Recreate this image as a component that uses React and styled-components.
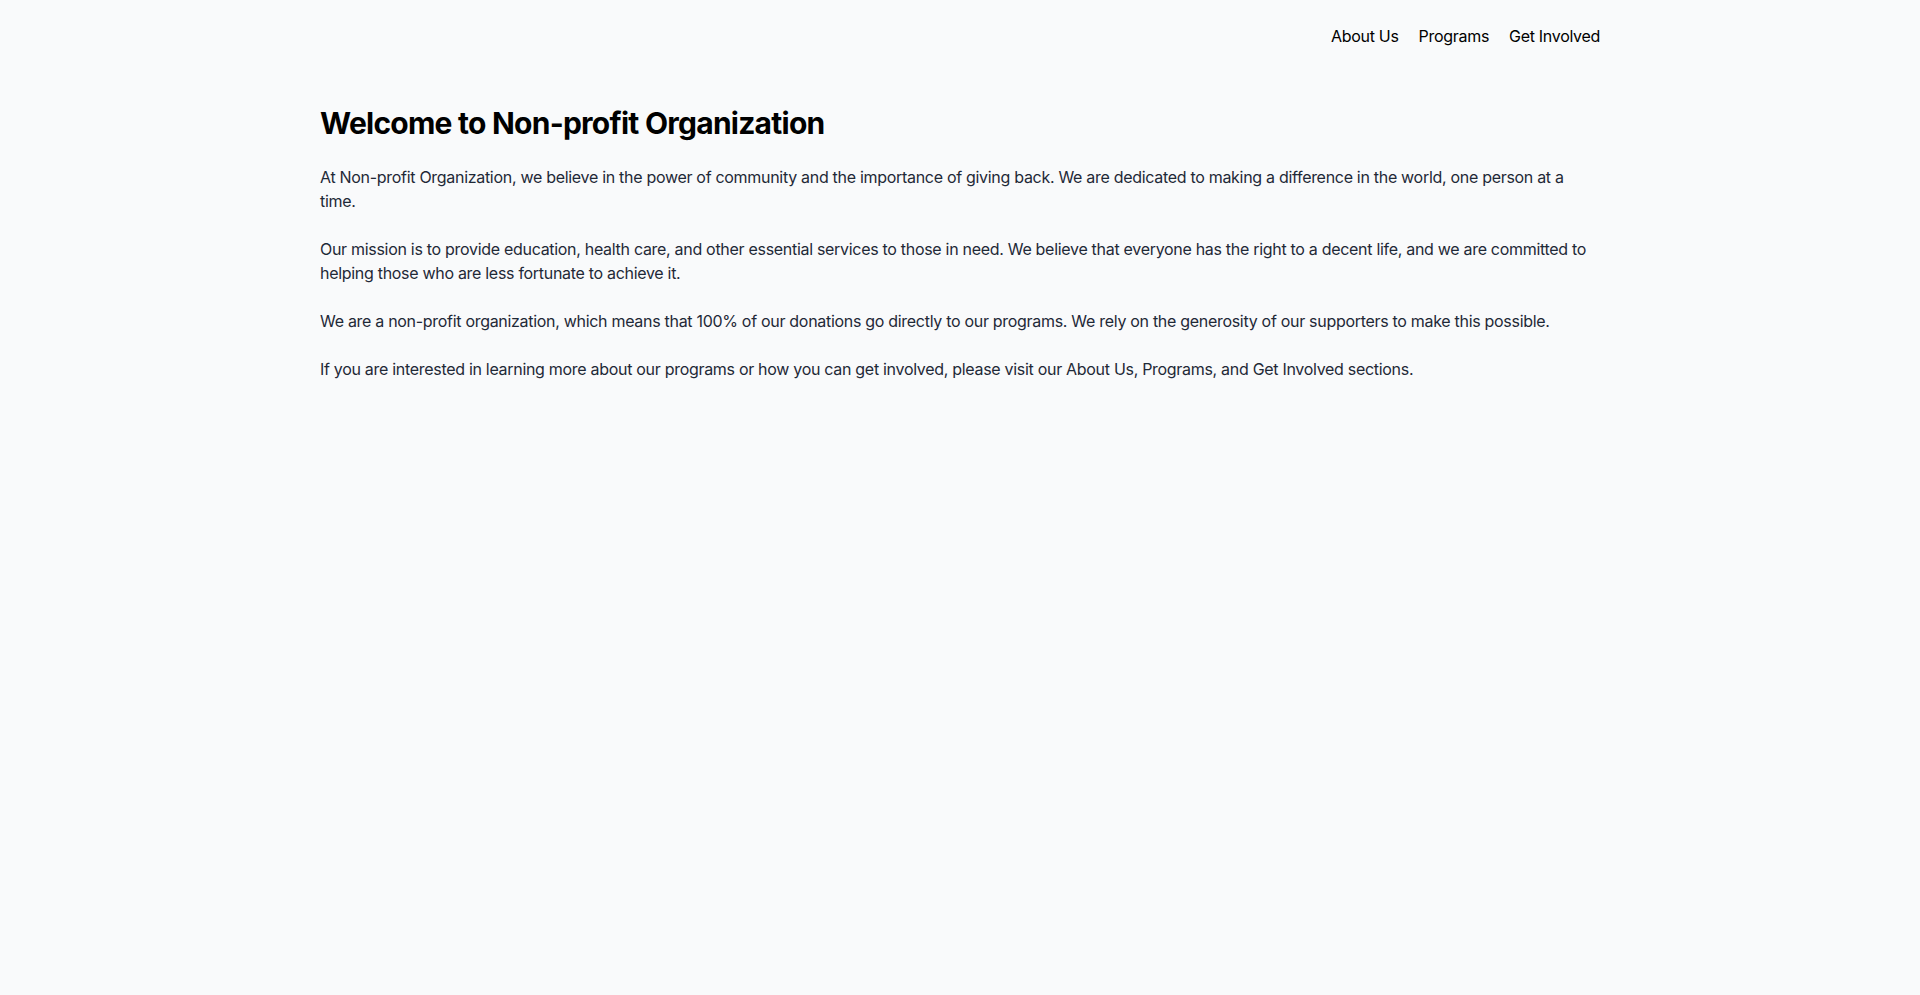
import React from "react";
import styled, { createGlobalStyle } from "styled-components";

const GlobalStyle = createGlobalStyle`
  html, body {
    margin: 0;
    padding: 0;
    background-color: #f9fafb;
  }
  body {
    font-family: Inter, "Noto Sans", "Liberation Sans", sans-serif;
    color: #111827;
  }
  * {
    box-sizing: border-box;
  }
`;

const Page = styled.div`
  min-height: 100vh;
  background-color: #f9fafb;
`;

const Header = styled.header`
  max-width: 1280px;
  margin: 0 auto;
  padding: 24px 0 0;
  display: flex;
  justify-content: flex-end;
`;

const Nav = styled.nav`
  display: flex;
  gap: 20px;

  a {
    color: #000;
    text-decoration: none;
    font-size: 16px;
    line-height: 24px;
    letter-spacing: -0.3px;
  }
`;

const Main = styled.main`
  max-width: 1280px;
  margin: 0 auto;
  padding-top: 57px;
`;

const Title = styled.h1`
  margin: 0 0 24px;
  font-size: 30px;
  line-height: 36px;
  font-weight: 700;
  letter-spacing: -0.75px;
  color: #000;
`;

const Text = styled.p`
  margin: 0 0 24px;
  font-size: 16px;
  line-height: 24px;
  letter-spacing: -0.3px;
  color: #1f2937;
`;

const links = ["About Us", "Programs", "Get Involved"];

const paragraphs = [
  "At Non-profit Organization, we believe in the power of community and the importance of giving back. We are dedicated to making a difference in the world, one person at a time.",
  "Our mission is to provide education, health care, and other essential services to those in need. We believe that everyone has the right to a decent life, and we are committed to helping those who are less fortunate to achieve it.",
  "We are a non-profit organization, which means that 100% of our donations go directly to our programs. We rely on the generosity of our supporters to make this possible.",
  "If you are interested in learning more about our programs or how you can get involved, please visit our About Us, Programs, and Get Involved sections.",
];

export default function App() {
  return (
    <Page>
      <GlobalStyle />
      <Header>
        <Nav>
          {links.map((link) => (
            <a key={link} href="#">
              {link}
            </a>
          ))}
        </Nav>
      </Header>
      <Main>
        <Title>Welcome to Non-profit Organization</Title>
        {paragraphs.map((text, i) => (
          <Text key={i}>{text}</Text>
        ))}
      </Main>
    </Page>
  );
}
